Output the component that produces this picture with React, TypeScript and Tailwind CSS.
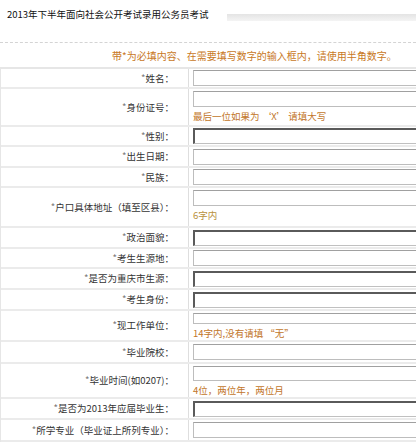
const FONT = "font-['SimSun','Noto_Sans_CJK_SC',sans-serif]";

type Row = {
  label: string;
  h: string;
  dark?: boolean;
  hint?: string;
  hintColor?: string;
};

const rows: Row[] = [
  { label: "*姓名：", h: "h-[20px]" },
  { label: "*身份证号：", h: "h-[38px]", hint: "最后一位如果为 ‘X’ 请填大写" },
  { label: "*性别：", h: "h-[20px]", dark: true },
  { label: "*出生日期：", h: "h-[21px]" },
  { label: "*民族：", h: "h-[20px]" },
  { label: "*户口具体地址（填至区县）：", h: "h-[40px]", hint: "6字内", hintColor: "text-[#b8903c]" },
  { label: "*政治面貌：", h: "h-[21px]", dark: true },
  { label: "*考生生源地：", h: "h-[20px]" },
  { label: "*是否为重庆市生源：", h: "h-[21px]", dark: true },
  { label: "*考生身份：", h: "h-[21px]", dark: true },
  { label: "*现工作单位：", h: "h-[31px]", hint: "14字内,没有请填 “无”" },
  { label: "*毕业院校：", h: "h-[22px]" },
  { label: "*毕业时间(如0207)：", h: "h-[35px]", hint: "4位，两位年，两位月" },
  { label: "*是否为2013年应届毕业生：", h: "h-[21px]", dark: true },
  { label: "*所学专业（毕业证上所列专业）：", h: "h-[22px]" },
];

function FormRow({ row }: { row: Row }) {
  return (
    <div className={`flex ${row.h} border-b-2 border-[#ebebeb]`}>
      <div className="w-[188px] shrink-0 border-r border-[#dedede] flex items-center justify-end pr-[14px] text-[9.5px] text-[#333]">
        <span className="text-[#777]">*</span>
        {row.label.slice(1)}
      </div>
      <div className={`flex-1 flex flex-col pl-[4px] ${row.hint ? "justify-start pt-[2px]" : "justify-center"}`}>
        <div
          className={`h-[16px] w-[260px] bg-white ${
            row.dark
              ? "border border-[#c0c0c0] border-t-2 border-l-2 border-t-[#5a5a5a] border-l-[#5a5a5a]"
              : "border border-[#bdbdbd] border-t-[#a0a0a0]"
          }`}
        />
        {row.hint && (
          <div className={`text-[9.5px] leading-[14px] mt-[2px] ${row.hintColor ?? "text-[#c2762a]"}`}>
            {row.hint}
          </div>
        )}
      </div>
    </div>
  );
}

export default function App() {
  return (
    <div className={`w-[416px] h-[444px] overflow-hidden bg-white ${FONT}`}>
      <div className="flex items-center h-[28px]">
        <div className="pl-[7px] text-[9.5px] text-[#111] w-[227px] shrink-0">
          2013年下半年面向社会公开考试录用公务员考试
        </div>
        <div className="flex-1 h-[7px] mt-[6px] bg-gradient-to-b from-[#e4e4e4] to-[#f4f4f4]" />
      </div>
      <div className="h-[15px] border-b border-dashed border-[#d4d4d4]" />
      <div className="h-[24px] flex items-center pl-[112px] text-[10px] text-[#c8781e]">
        带*为必填内容、在需要填写数字的输入框内，请使用半角数字。
      </div>
      <div className="border-t-2 border-l border-[#e6e6e6]">
        {rows.map((r) => (
          <FormRow key={r.label} row={r} />
        ))}
      </div>
    </div>
  );
}
